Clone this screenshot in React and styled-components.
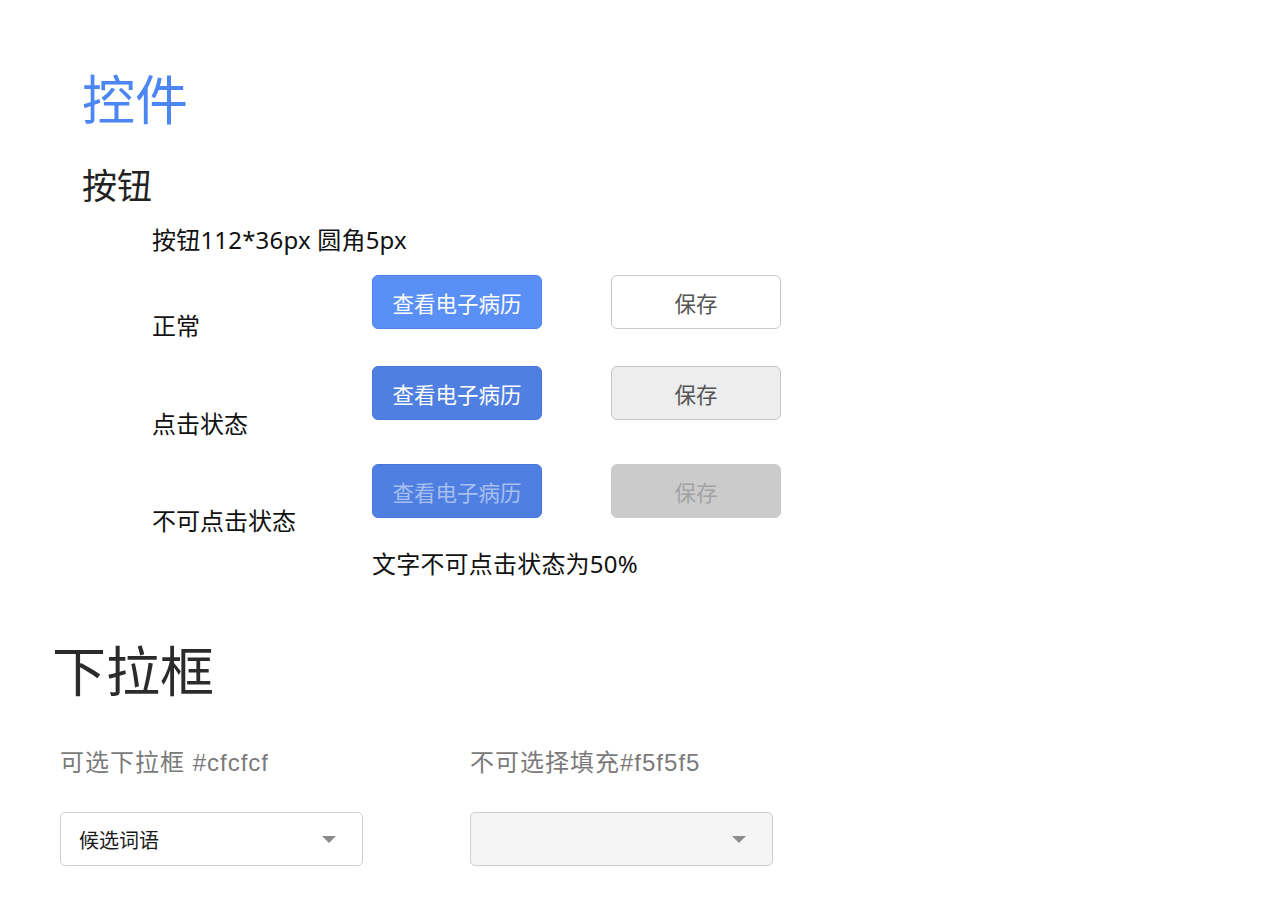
import React from "react";
import styled, { createGlobalStyle } from "styled-components";

const GlobalStyle = createGlobalStyle`
  body {
    margin: 0;
    background: #ffffff;
    font-family: "Noto Sans", "Noto Sans CJK SC", sans-serif;
    color: #111;
  }
`;

const Page = styled.div`
  width: 1280px;
  min-height: 905px;
  padding-top: 70px;
  box-sizing: border-box;
`;

const Title = styled.h1`
  margin: 0 0 0 82px;
  font-size: 53px;
  line-height: 60px;
  font-weight: 400;
  color: #4c86f2;
`;

const SubTitle = styled.h2`
  margin: 36px 0 0 82px;
  font-size: 35px;
  line-height: 40px;
  font-weight: 400;
  color: #222;
`;

const Block = styled.div`
  margin-left: 152px;
`;

const Note = styled.p`
  margin: ${(p) => p.$top || 0}px 0 0 ${(p) => p.$left || 0}px;
  font-size: 24px;
  line-height: 30px;
  letter-spacing: 0.2px;
  color: #111;
`;

const Row = styled.div`
  display: flex;
  align-items: flex-start;
  height: 54px;
  margin-top: ${(p) => p.$top}px;
`;

const Label = styled.span`
  width: 220px;
  flex-shrink: 0;
  margin-top: ${(p) => p.$offset}px;
  font-size: 24px;
  line-height: 30px;
  color: #111;
`;

const variants = {
  normal: { bg: "#5a8ff6", border: "#4f84ee", color: "#fff" },
  pressed: { bg: "#4f80e1", border: "#4676d8", color: "#fff" },
  disabled: { bg: "#4f80e1", border: "#4676d8", color: "rgba(255,255,255,0.5)" },
};

const ghostVariants = {
  normal: { bg: "#fff", border: "#c9c9c9", color: "#555" },
  pressed: { bg: "#ededed", border: "#c6c6c6", color: "#555" },
  disabled: { bg: "#cbcbcb", border: "#cbcbcb", color: "#a3a3a3" },
};

const Button = styled.button`
  width: 170px;
  height: 54px;
  box-sizing: border-box;
  border-radius: 6px;
  border: 1.5px solid ${(p) => p.$v.border};
  background: ${(p) => p.$v.bg};
  color: ${(p) => p.$v.color};
  font-family: "Noto Sans CJK SC", sans-serif;
  font-size: 21.5px;
  padding: 0;
  cursor: pointer;
`;

const GhostButton = styled(Button)`
  margin-left: 69px;
`;

const SectionTitle = styled.h2`
  margin: 62px 0 0 52px;
  font-size: 54px;
  line-height: 60px;
  font-weight: 400;
  color: #2b2b2b;
`;

const SelectGrid = styled.div`
  display: grid;
  grid-template-columns: 303px 303px;
  column-gap: 107px;
  margin: 47px 0 0 60px;
`;

const SelectCol = styled.div`
  display: flex;
  flex-direction: column;
  gap: 34px;
`;

const SelectLabel = styled.span`
  font-family: "Liberation Sans", "Noto Sans CJK SC", sans-serif;
  font-size: 24px;
  line-height: 30px;
  letter-spacing: 1px;
  color: #7a7a7a;
`;

const Select = styled.div`
  height: 54px;
  box-sizing: border-box;
  border: 1.5px solid #cfcfcf;
  border-radius: 5px;
  background: ${(p) => (p.$disabled ? "#f5f5f5" : "#fff")};
  display: flex;
  align-items: center;
  justify-content: space-between;
  padding: 0 26px 0 18px;
  font-family: "Noto Sans CJK SC", sans-serif;
  font-size: 20px;
  color: #1a1a1a;
`;

const Caret = styled.span`
  width: 0;
  height: 0;
  border-left: 7px solid transparent;
  border-right: 7px solid transparent;
  border-top: 7px solid #8c8c8c;
`;

const rows = [
  { label: "正常", state: "normal", top: 20, offset: 36 },
  { label: "点击状态", state: "pressed", top: 37, offset: 43 },
  { label: "不可点击状态", state: "disabled", top: 44, offset: 42 },
];

export default function App() {
  return (
    <Page>
      <GlobalStyle />
      <Title>控件</Title>
      <SubTitle>按钮</SubTitle>
      <Block>
        <Note $top={19}>按钮112*36px 圆角5px</Note>
        {rows.map((r) => (
          <Row key={r.state} $top={r.top}>
            <Label $offset={r.offset}>{r.label}</Label>
            <Button $v={variants[r.state]}>查看电子病历</Button>
            <GhostButton $v={ghostVariants[r.state]}>保存</GhostButton>
          </Row>
        ))}
        <Note $top={31} $left={220}>文字不可点击状态为50%</Note>
      </Block>
      <SectionTitle>下拉框</SectionTitle>
      <SelectGrid>
        <SelectCol>
          <SelectLabel>可选下拉框 #cfcfcf</SelectLabel>
          <Select>
            <span>候选词语</span>
            <Caret />
          </Select>
        </SelectCol>
        <SelectCol>
          <SelectLabel>不可选择填充#f5f5f5</SelectLabel>
          <Select $disabled>
            <span />
            <Caret />
          </Select>
        </SelectCol>
      </SelectGrid>
    </Page>
  );
}
